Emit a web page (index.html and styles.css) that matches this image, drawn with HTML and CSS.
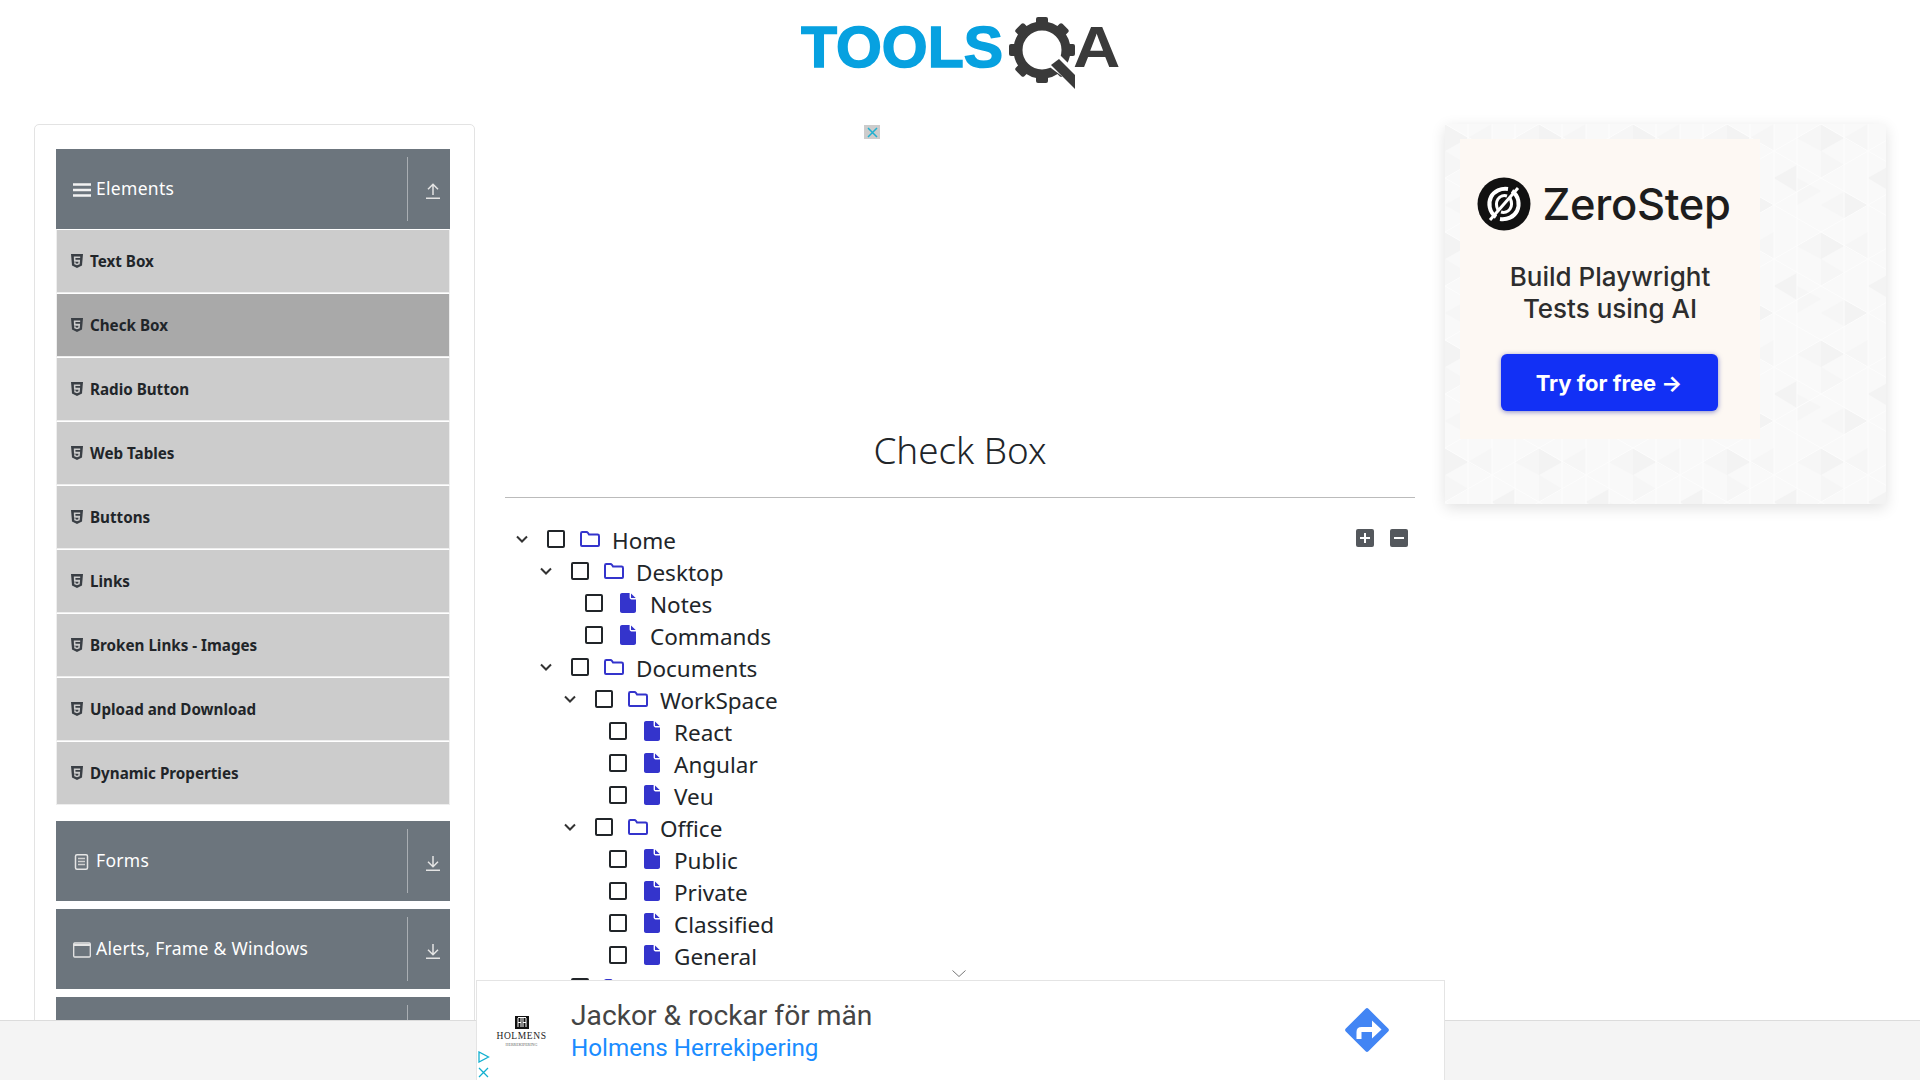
FILE: index.html
```html
<!DOCTYPE html>
<html lang="en">
<head>
<meta charset="utf-8">
<title>ToolsQA Check Box</title>
<link rel="stylesheet" href="styles.css">
</head>
<body>
<svg class="defs" width="0" height="0" aria-hidden="true">
  <symbol id="i-html" viewBox="0 0 12 14"><path fill="#3a3f45" d="M0 0h12l-1 11.6L6 14l-5-2.4z"/><path fill="#ccc" d="M2.8 2.6h6.4v1.5H4.4l.1 1.6h4.6l-.4 4.6L6 11.2l-2.7-.9-.2-2h1.5l.1 1 1.3.4 1.3-.4.1-1.6H3z"/></symbol>
  <symbol id="i-folder" viewBox="0 0 20 16"><path fill="none" stroke="#3434cc" stroke-width="2" d="M1 14V2.4c0-.8.5-1.4 1.3-1.4h4.2c.6 0 1 .3 1.4.8L9 3.5h8.6c.8 0 1.4.6 1.4 1.4V14c0 .6-.4 1-1 1H2c-.6 0-1-.4-1-1z"/></symbol>
  <symbol id="i-file" viewBox="0 0 16 20"><path fill="#3434cc" d="M2 0h7.2c.3 0 .6.1.8.3L9.600 0v4.500c0 1 .9 1.900 1.900 1.900H16v11.600c0 1.100-.9 2-2 2H2c-1.100 0-2-.9-2-2V2C0 .9.900 0 2 0zM11 .4l4.700 4.700H11z"/></symbol>
  <symbol id="i-chev" viewBox="0 0 12 8"><path fill="none" stroke="#333" stroke-width="2" d="M1 1.500l5 5 5-5"/></symbol>
  <symbol id="i-up" viewBox="0 0 16 16"><path fill="none" stroke="#e4e4e4" stroke-width="1.500" d="M1 15.200h14M8 12V1.200M3 6.200l5-5 5 5"/></symbol>
  <symbol id="i-down" viewBox="0 0 16 16"><path fill="none" stroke="#e4e4e4" stroke-width="1.500" d="M1 15.200h14M8 1v10.800M3 6.800l5 5 5-5"/></symbol>
</svg>

<header class="brand">
  <svg class="logo" width="324" height="78" viewBox="0 0 324 78" role="img" aria-label="ToolsQA">
    <text x="0" y="52" class="logo-tools" textLength="202" lengthAdjust="spacingAndGlyphs">TOOLS</text>
    <g fill="#3a3a3a">
      <g transform="translate(241 35)">
        <circle r="24" fill="none" stroke="#3a3a3a" stroke-width="9"/>
        <rect x="-6" y="-33" width="12" height="10" rx="2"/>
        <rect x="-6" y="-33" width="12" height="10" rx="2" transform="rotate(45)"/>
        <rect x="-6" y="-33" width="12" height="10" rx="2" transform="rotate(90)"/>
        <rect x="-6" y="-33" width="12" height="10" rx="2" transform="rotate(135)"/>
        <rect x="-6" y="-33" width="12" height="10" rx="2" transform="rotate(180)"/>
        <rect x="-6" y="-33" width="12" height="10" rx="2" transform="rotate(225)"/>
        <rect x="-6" y="-33" width="12" height="10" rx="2" transform="rotate(270)"/>
        <rect x="-6" y="-33" width="12" height="10" rx="2" transform="rotate(315)"/>
      </g>
      <path fill="#fff" d="M246 50l12-11 20 20v15z"/>
      <path d="M250 50l8-6 16 16v14z"/>
    </g>
    <text x="272" y="52" class="logo-a" transform="translate(272 0) scale(1.150 1) translate(-272 0)">A</text>
  </svg>
</header>

<main class="layout">
  <nav class="sidebar">
    <section class="group">
      <div class="group-head">
        <svg class="head-icon" width="18" height="16" viewBox="0 0 18 16"><path fill="none" stroke="#f2f2f2" stroke-width="2.400" d="M0 2.500h18M0 8h18M0 13.500h18"/></svg>
        <span class="head-label">Elements</span>
        <span class="head-action"><svg width="16" height="16"><use href="#i-up"/></svg></span>
      </div>
      <ul class="menu">
        <li class="menu-item"><svg width="12" height="14"><use href="#i-html"/></svg><span>Text Box</span></li>
        <li class="menu-item is-active"><svg width="12" height="14"><use href="#i-html"/></svg><span>Check Box</span></li>
        <li class="menu-item"><svg width="12" height="14"><use href="#i-html"/></svg><span>Radio Button</span></li>
        <li class="menu-item"><svg width="12" height="14"><use href="#i-html"/></svg><span>Web Tables</span></li>
        <li class="menu-item"><svg width="12" height="14"><use href="#i-html"/></svg><span>Buttons</span></li>
        <li class="menu-item"><svg width="12" height="14"><use href="#i-html"/></svg><span>Links</span></li>
        <li class="menu-item"><svg width="12" height="14"><use href="#i-html"/></svg><span>Broken Links - Images</span></li>
        <li class="menu-item"><svg width="12" height="14"><use href="#i-html"/></svg><span>Upload and Download</span></li>
        <li class="menu-item"><svg width="12" height="14"><use href="#i-html"/></svg><span>Dynamic Properties</span></li>
      </ul>
    </section>
    <section class="group group-gap">
      <div class="group-head">
        <svg class="head-icon" width="18" height="16" viewBox="0 0 18 16"><rect x="2.500" y=".8" width="12" height="14.400" rx="1.500" fill="none" stroke="#e6e6e6" stroke-width="1.500"/><path stroke="#d0d0d0" stroke-width="1.500" d="M5 4.500h7M5 7.500h7M5 10.500h7"/></svg>
        <span class="head-label">Forms</span>
        <span class="head-action"><svg width="16" height="16"><use href="#i-down"/></svg></span>
      </div>
    </section>
    <section class="group">
      <div class="group-head">
        <svg class="head-icon" width="18" height="16" viewBox="0 0 18 16"><rect x=".7" y="1" width="16.600" height="14" rx="1" fill="none" stroke="#e6e6e6" stroke-width="1.300"/><path stroke="#e6e6e6" stroke-width="2" d="M1 3h16"/></svg>
        <span class="head-label">Alerts, Frame &amp; Windows</span>
        <span class="head-action"><svg width="16" height="16"><use href="#i-down"/></svg></span>
      </div>
    </section>
    <section class="group">
      <div class="group-head">
        <span class="head-label"></span>
        <span class="head-action"></span>
      </div>
    </section>
  </nav>

  <section class="content">
    <div class="ad-slot"><span class="ad-x"><svg width="11" height="11" viewBox="0 0 11 11"><path stroke="#1fb0d0" stroke-width="1.500" d="M1 1l9 9M10 1l-9 9"/></svg></span></div>
    <h1 class="title">Check Box</h1>
    <hr class="rule">
    <div class="tree-wrap">
      <ul class="tree">
        <li>
          <div class="row"><svg class="chev" width="12" height="8"><use href="#i-chev"/></svg><span class="box"></span><svg class="ic-folder" width="20" height="16"><use href="#i-folder"/></svg><span class="name">Home</span></div>
          <ul class="tree sub">
            <li>
              <div class="row"><svg class="chev" width="12" height="8"><use href="#i-chev"/></svg><span class="box"></span><svg class="ic-folder" width="20" height="16"><use href="#i-folder"/></svg><span class="name">Desktop</span></div>
              <ul class="tree sub">
                <li class="row leaf"><span class="box"></span><svg class="ic-file" width="16" height="20"><use href="#i-file"/></svg><span class="name">Notes</span></li>
                <li class="row leaf"><span class="box"></span><svg class="ic-file" width="16" height="20"><use href="#i-file"/></svg><span class="name">Commands</span></li>
              </ul>
            </li>
            <li>
              <div class="row"><svg class="chev" width="12" height="8"><use href="#i-chev"/></svg><span class="box"></span><svg class="ic-folder" width="20" height="16"><use href="#i-folder"/></svg><span class="name">Documents</span></div>
              <ul class="tree sub">
                <li>
                  <div class="row"><svg class="chev" width="12" height="8"><use href="#i-chev"/></svg><span class="box"></span><svg class="ic-folder" width="20" height="16"><use href="#i-folder"/></svg><span class="name">WorkSpace</span></div>
                  <ul class="tree sub">
                    <li class="row leaf"><span class="box"></span><svg class="ic-file" width="16" height="20"><use href="#i-file"/></svg><span class="name">React</span></li>
                    <li class="row leaf"><span class="box"></span><svg class="ic-file" width="16" height="20"><use href="#i-file"/></svg><span class="name">Angular</span></li>
                    <li class="row leaf"><span class="box"></span><svg class="ic-file" width="16" height="20"><use href="#i-file"/></svg><span class="name">Veu</span></li>
                  </ul>
                </li>
                <li>
                  <div class="row"><svg class="chev" width="12" height="8"><use href="#i-chev"/></svg><span class="box"></span><svg class="ic-folder" width="20" height="16"><use href="#i-folder"/></svg><span class="name">Office</span></div>
                  <ul class="tree sub">
                    <li class="row leaf"><span class="box"></span><svg class="ic-file" width="16" height="20"><use href="#i-file"/></svg><span class="name">Public</span></li>
                    <li class="row leaf"><span class="box"></span><svg class="ic-file" width="16" height="20"><use href="#i-file"/></svg><span class="name">Private</span></li>
                    <li class="row leaf"><span class="box"></span><svg class="ic-file" width="16" height="20"><use href="#i-file"/></svg><span class="name">Classified</span></li>
                    <li class="row leaf"><span class="box"></span><svg class="ic-file" width="16" height="20"><use href="#i-file"/></svg><span class="name">General</span></li>
                  </ul>
                </li>
              </ul>
            </li>
            <li>
              <div class="row"><svg class="chev" width="12" height="8"><use href="#i-chev"/></svg><span class="box"></span><svg class="ic-folder" width="20" height="16"><use href="#i-folder"/></svg><span class="name">Downloads</span></div>
            </li>
          </ul>
        </li>
      </ul>
      <div class="tree-tools">
        <span class="tool"><svg width="12" height="12" viewBox="0 0 12 12"><path stroke="#fff" stroke-width="2" d="M6 1v10M1 6h10"/></svg></span>
        <span class="tool"><svg width="12" height="12" viewBox="0 0 12 12"><path stroke="#fff" stroke-width="2" d="M1 6h10"/></svg></span>
      </div>
    </div>
  </section>

  <aside class="promo">
    <svg class="promo-bg" width="441" height="380" aria-hidden="true">
      <defs>
        <pattern id="tri" width="94" height="108" patternUnits="userSpaceOnUse">
          <rect width="94" height="108" fill="#f9f9f9"/>
          <path fill="#f3f3f3" d="M0 0l23 14L0 27zM47 54l23-13v27zM23 68l24 13-24 14z"/>
          <path fill="#f6f6f6" d="M23 14L47 0v27zM70 14L94 0v27zM0 27l23 14L0 54zM70 54l24 13-24 14zM0 81l23 13V68z"/>
          <path fill="none" stroke="#fdfdfd" stroke-width="1" d="M0 0l94 54M0 54l94 54M0 54L94 0M0 108l94-54M23 0v108M47 0v108M70 0v108"/>
        </pattern>
      </defs>
      <rect width="441" height="380" fill="url(#tri)"/>
    </svg>
    <div class="promo-card">
      <div class="promo-brand">
        <svg width="54" height="54" viewBox="0 0 54 54"><circle cx="27" cy="27" r="26.500" fill="#111"/><path fill="none" stroke="#fff" stroke-width="4" d="M19 40C12 35 11 26 14 20c3-6 10-9 17-8M35 14c7 5 8 14 5 20-3 6-10 9-17 8"/><path stroke="#fff" stroke-width="3" d="M13 43L41 11"/><path fill="none" stroke="#fff" stroke-width="3" d="M21 33c-2-4-2-8 0-11 2-3 6-4 9-3M33 21c2 4 2 8 0 11-2 3-6 4-9 3"/></svg>
        <span class="promo-name">ZeroStep</span>
      </div>
      <p class="promo-text">Build Playwright<br>Tests using AI</p>
      <span class="promo-btn">Try for free →</span>
    </div>
  </aside>
</main>

<footer class="bottom-bar">
  <div class="bottom-ad">
    <svg class="ad-chev" width="14" height="7" viewBox="0 0 14 7"><path fill="none" stroke="#777" stroke-width="1" d="M.5.5L7 6.500 13.500.5"/></svg>
    <div class="ad-marks">
      <svg width="12" height="12" viewBox="0 0 12 12"><path fill="none" stroke="#12b0d0" stroke-width="1.300" d="M1 1v10l9.500-5z"/></svg>
      <svg width="11" height="11" viewBox="0 0 11 11"><path stroke="#12b0d0" stroke-width="1.300" d="M1 1l9 9M10 1l-9 9"/></svg>
    </div>
    <div class="ad-logo">
      <svg width="14" height="13" viewBox="0 0 14 13"><rect width="14" height="13" fill="#111"/><path stroke="#fff" stroke-width="1" d="M3 2v9M6 2v9M8 2v9M11 2v9M3 6.500h3M8 6.500h3M3 1.500h8"/></svg>
      <span class="ad-logo-name">HOLMENS</span>
      <span class="ad-logo-sub">HERREKIPERING</span>
    </div>
    <div class="ad-copy">
      <div class="ad-head">Jackor &amp; rockar för män</div>
      <div class="ad-link">Holmens Herrekipering</div>
    </div>
    <svg class="ad-go" width="48" height="48" viewBox="0 0 48 48"><rect x="8" y="8" width="32" height="32" rx="2" fill="#4285f4" transform="rotate(45 24 24)"/><path fill="none" stroke="#fff" stroke-width="5" d="M16 33v-7c0-1.500 1-2.500 2.500-2.500H31"/><path fill="#fff" d="M29 14.500l9.500 9-9.500 9z"/></svg>
  </div>
</footer>
</body>
</html>
```
FILE: styles.css
```css
* { box-sizing: border-box; }
html, body { margin: 0; padding: 0; height: 1080px; overflow: hidden; }
body { background: #fff; color: #212529; font-family: "Noto Sans", "Open Sans", sans-serif; position: relative; }
ul { list-style: none; margin: 0; padding: 0; }
.defs { position: absolute; }

.brand { height: 124px; display: flex; justify-content: center; padding-top: 15px; }
.logo { display: block; margin-left: 6px; }
.logo-tools { font: 700 57px "Liberation Sans", sans-serif; fill: #07a1e0; stroke: #07a1e0; stroke-width: 1.500px; }
.logo-a { font: 700 57px "Liberation Sans", sans-serif; fill: #3a3a3a; }

.layout { display: flex; align-items: flex-start; padding-left: 34px; }

.sidebar { width: 441px; flex: none; height: 1000px; border: 1px solid #e3e3e3; border-radius: 5px; padding: 24px 24px 0 21px; }
.group { margin-bottom: 8px; }
.group-gap { margin-top: 16px; }
.group-head { height: 80px; background: #6c757d; color: #fff; display: flex; align-items: center; padding-left: 17px; }
.head-icon { flex: none; margin-top: 2px; }
.head-label { flex: 1; font-size: 17.500px; letter-spacing: .3px; line-height: 20px; margin-left: 5px; margin-top: -3px; }
.head-action { width: 43px; height: 64px; border-left: 1px solid #a9aeb3; display: flex; align-items: center; padding-left: 17px; flex: none; }
.head-action svg { margin-top: 4px; }
.menu { margin-bottom: 0; }
.menu-item { height: 64px; background: #ccc; border: 1px solid #eee; border-top-color: #fff; display: flex; align-items: center; gap: 7px; padding-left: 14px; font-size: 15.200px; font-weight: 700; color: #212529; }
.menu-item.is-active { background: #a9a9a9; }

.content { width: 910px; margin-left: 30px; flex: none; }
.ad-slot { height: 280px; padding-left: 359px; }
.ad-x { width: 16px; height: 14px; margin-top: 1px; background: #ccc; display: flex; align-items: center; justify-content: center; }
.title { margin: 0; height: 60px; padding-top: 15px; font-size: 36.800px; line-height: 60px; font-weight: 300; text-align: center; color: #212529; }
.rule { margin: 32px 0 0; border: 0; border-top: 1px solid #bbb; }
.tree-wrap { display: flex; justify-content: space-between; padding: 26px 7px 0 2px; }
.tree { font-size: 22.500px; }
.sub { padding-left: 24px; }
.row { height: 32px; display: flex; align-items: center; }
.chev { width: 12px; margin: -2px 19px 0 9px; flex: none; }
.leaf { padding-left: 30px; }
.box { width: 18px; height: 18px; border: 2px solid #212529; border-radius: 2px; flex: none; margin-top: -2px; }
.ic-folder { margin: -2px 12px 0 15px; flex: none; }
.ic-file { margin: -2px 14px 0 17px; flex: none; }
.name { line-height: 32px; color: #212529; margin-top: 2px; }
.tree-tools { display: flex; gap: 16px; padding-top: 5px; }
.tool { width: 18px; height: 18px; border-radius: 2px; background: #54585d; display: flex; align-items: center; justify-content: center; }

.promo { width: 441px; height: 380px; margin-left: 30px; flex: none; position: relative; box-shadow: 0 4px 14px rgba(0,0,0,.12); padding: 15px; }
.promo-bg { position: absolute; left: 0; top: 0; }
.promo-card { position: relative; width: 300px; height: 300px; background: #fdf8f3; display: flex; flex-direction: column; align-items: center; font-family: Inter, sans-serif; color: #1d1d1d; }
.promo-brand { display: flex; align-items: center; gap: 11px; margin: 38px 12px 0 0; }
.promo-name { font-size: 43.500px; line-height: 54px; font-weight: 500; letter-spacing: -.3px; }
.promo-text { margin: 30px 0 0; font-size: 26px; line-height: 32px; font-weight: 500; text-align: center; color: #2d2d2d; }
.promo-btn { margin: 29px 2px 0 0; width: 217px; height: 57px; border-radius: 6px; background: #1230f5; color: #fff; font-size: 22px; font-weight: 700; display: flex; align-items: center; justify-content: center; box-shadow: 0 1px 5px rgba(20,30,160,.5); }

.bottom-bar { position: absolute; left: 0; right: 0; top: 1020px; height: 60px; background: #f4f4f4; border-top: 1px solid #dcdcdc; }
.bottom-ad { position: absolute; left: 476px; top: -41px; width: 969px; height: 101px; background: #fff; border: 1px solid #e4e4e4; display: flex; align-items: center; }
.ad-chev { position: absolute; left: 475px; top: -11px; }
.ad-marks { position: absolute; left: 1px; bottom: 2px; display: flex; flex-direction: column; gap: 4px; }
.ad-marks svg { display: block; }
.ad-logo { width: 51px; margin-left: 19px; display: flex; flex-direction: column; align-items: center; font-family: "Liberation Serif", serif; color: #222; margin-top: 2px; }
.ad-logo-name { font-size: 9.500px; line-height: 12px; letter-spacing: .6px; margin-top: 1px; }
.ad-logo-sub { font-size: 4px; line-height: 5px; color: #666; }
.ad-copy { margin-left: 24px; flex: 1; font-family: Roboto, sans-serif; }
.ad-head { font-size: 28.200px; line-height: 34px; color: #444; }
.ad-link { font-size: 24.200px; line-height: 30px; color: #1a8cff; }
.ad-go { margin: -2px 53px 0 0; flex: none; }
```
